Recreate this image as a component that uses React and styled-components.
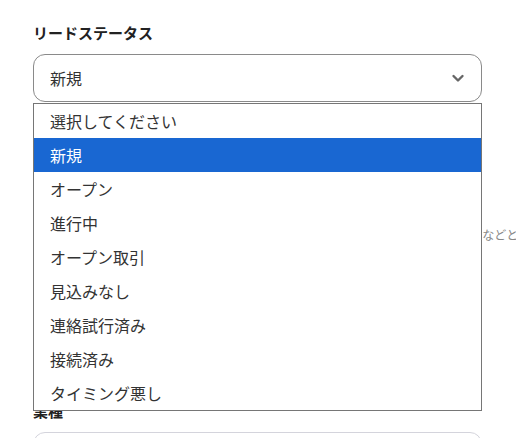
import styled, { createGlobalStyle } from "styled-components";

const GlobalStyle = createGlobalStyle`
    body{
        margin: 0;
        overflow: hidden;
        background: #fff;
        font-family: "Noto Sans CJK JP", "Noto Sans", sans-serif;
        color: #333;
    }
`

const Page = styled.div`
    width: 449px;
    padding: 22px 0 0 33px;
`

const Field = styled.div`
    position: relative;
    margin-bottom: 32px;
`

const Label = styled.div`
    font-size: 15px;
    line-height: 22px;
    font-weight: bold;
    color: #222;
    margin-bottom: 10px;
`

const SelectBox = styled.div`
    box-sizing: border-box;
    height: 48px;
    border: 1px solid #8a8a8a;
    border-radius: 12px;
    display: flex;
    align-items: center;
    justify-content: space-between;
    padding: 0 16px 0 16px;
    font-size: 16px;
    color: #333;
`

const Input = styled.div`
    box-sizing: border-box;
    height: ${({ $tall }) => ($tall ? "60px" : "48px")};
    border: 1px solid #d4d4dc;
    border-radius: 12px;
`

const Hint = styled.div`
    margin-top: 12px;
    font-size: 12px;
    line-height: 18px;
    color: #888;
    white-space: nowrap;
    padding-left: 6px;
`

const Options = styled.ul`
    position: absolute;
    z-index: 10;
    top: 81px;
    left: 0;
    right: 0;
    margin: 0;
    padding: 0;
    list-style: none;
    background: #fff;
    border: 1px solid #767676;
`

const Option = styled.li`
    height: 34px;
    display: flex;
    align-items: center;
    padding-left: 16px;
    font-size: 16px;
    color: ${({ $active }) => ($active ? "#fff" : "#333")};
    background: ${({ $active }) => ($active ? "#1967d2" : "#fff")};
`

const options = [
    "選択してください",
    "新規",
    "オープン",
    "進行中",
    "オープン取引",
    "見込みなし",
    "連絡試行済み",
    "接続済み",
    "タイミング悪し",
]

function Chevron() {
    return (
        <svg width="14" height="14" viewBox="0 0 14 14">
            <path d="M2.5 5l4.5 4.5L11.5 5" fill="none" stroke="#666" strokeWidth="2.4" strokeLinecap="round" strokeLinejoin="round" />
        </svg>
    )
}

export default function App() {
    return (
        <>
            <GlobalStyle />
            <Page>
                <Field>
                    <Label>リードステータス</Label>
                    <SelectBox>
                        <span>新規</span>
                        <Chevron />
                    </SelectBox>
                    <Options>
                        {options.map((o) => (
                            <Option key={o} $active={o === "新規"}>{o}</Option>
                        ))}
                    </Options>
                </Field>
                <Field>
                    <Label>担当者名</Label>
                    <Input />
                    <Hint>担当者が複数いる場合は、主な担当者の氏名をご入力してください。役職や部署名などと一緒に記入できます。</Hint>
                </Field>
                <Field>
                    <Label>メモ</Label>
                    <Input $tall />
                </Field>
                <Field>
                    <Label>業種</Label>
                    <Input />
                </Field>
            </Page>
        </>
    )
}
